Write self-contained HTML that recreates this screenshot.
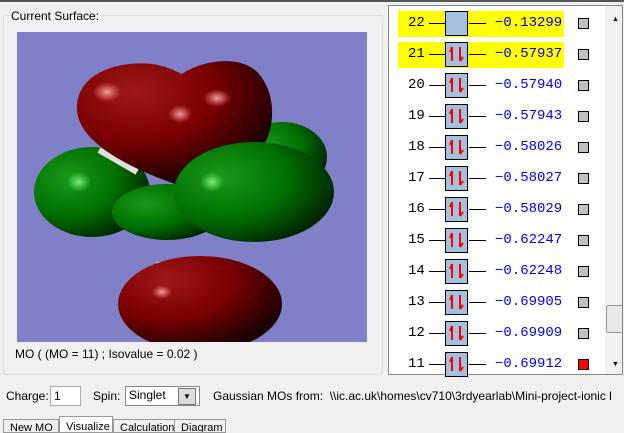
<!DOCTYPE html>
<html><head><style>
body{margin:0;width:624px;height:425px;background:#f0f0f0;font-family:"Liberation Sans",sans-serif;font-size:12px;position:relative;overflow:hidden}
.a{position:absolute}
.row{position:absolute;left:398px;width:166px;height:26px;font-family:"Liberation Mono",monospace;font-size:14px}
.n{position:absolute;left:10px;top:4px;color:#000}
.l1{position:absolute;left:31px;top:12px;width:16px;height:1px;background:#000}
.l2{position:absolute;left:71px;top:12px;width:17px;height:1px;background:#000}
.bx{position:absolute;left:47px;top:0;width:23px;height:25px;border:1px solid #000;background:#a3c0dd;box-sizing:border-box}
.v{position:absolute;left:97px;top:4px;color:#0000ee}
.sq{position:absolute;left:180px;top:7px;width:9px;height:9px;border:1px solid #000;background:#c0c0c0}
.tab{position:absolute;top:419px;height:12px;border:1px solid #999;font-size:11px;padding-left:6px;line-height:17px;overflow:hidden;white-space:nowrap;box-sizing:content-box}
</style></head><body>
<div class="a" style="left:0;top:0;width:624px;height:2px;background:#555"></div>
<div class="a" style="left:3px;top:15px;width:378px;height:358px;border:1px solid #d5dfe5;border-radius:3px;background:#f0f0f0"></div>
<div class="a" style="left:9px;top:9px;background:#f0f0f0;padding:0 2px">Current Surface:</div>
<svg class="a" style="left:17px;top:32px" width="350" height="310">
<defs>
<radialGradient id="r" cx="30%" cy="25%" r="75%"><stop offset="0" stop-color="#a01818"/><stop offset=".55" stop-color="#780000"/><stop offset="1" stop-color="#200000"/></radialGradient>
<radialGradient id="g" cx="30%" cy="35%" r="75%"><stop offset="0" stop-color="#1a9a1a"/><stop offset=".55" stop-color="#007000"/><stop offset="1" stop-color="#002000"/></radialGradient>
<radialGradient id="h" r="50%"><stop offset="0" stop-color="#ffb0b0" stop-opacity=".9"/><stop offset="1" stop-color="#ff8080" stop-opacity="0"/></radialGradient>
<radialGradient id="hg" r="50%"><stop offset="0" stop-color="#a0ffa0" stop-opacity=".8"/><stop offset="1" stop-color="#60ff60" stop-opacity="0"/></radialGradient>
</defs>
<rect width="350" height="310" fill="#8080c8"/>
<ellipse cx="265" cy="125" rx="45" ry="35" fill="url(#g)"/>
<ellipse cx="75" cy="160" rx="58" ry="45" fill="url(#g)"/>
<ellipse cx="150" cy="180" rx="55" ry="28" fill="url(#g)"/>
<path d="M82 118 L120 140" stroke="#e0e0e0" stroke-width="6"/>
<path d="M158 152 C110 135 62 110 60 78 C58 45 95 28 135 32 C150 34 160 40 165 42 C185 28 225 22 242 42 C262 66 258 105 238 125 C215 142 185 150 158 152 Z" fill="url(#r)"/>
<ellipse cx="90" cy="60" rx="14" ry="10" fill="url(#h)"/>
<ellipse cx="163" cy="82" rx="12" ry="9" fill="url(#h)"/>
<ellipse cx="200" cy="66" rx="14" ry="9" fill="url(#h)"/>
<ellipse cx="237" cy="160" rx="80" ry="50" fill="url(#g)"/>
<ellipse cx="195" cy="150" rx="12" ry="10" fill="url(#hg)"/>
<ellipse cx="62" cy="150" rx="12" ry="10" fill="url(#hg)"/>
<path d="M140 233 L195 230" stroke="#ddd" stroke-width="6"/>
<ellipse cx="183" cy="272" rx="82" ry="48" fill="url(#r)"/>
<ellipse cx="145" cy="260" rx="10" ry="7" fill="url(#h)"/>
</svg>
<div class="a" style="left:15px;top:347px">MO ( (MO = 11) ; Isovalue = 0.02 )</div>
<div class="a" style="left:388px;top:5px;width:233px;height:368px;border:1px solid #828790;background:#fff;overflow:hidden">
<div class="a" style="left:216px;top:0;width:17px;height:368px;background:#f0f0f0"></div>
<div class="a" style="left:223px;top:10px;font-size:7px">▲</div>
<div class="a" style="left:223px;top:355px;font-size:7px">▼</div>
<div class="a" style="left:217px;top:299px;width:15px;height:26px;border:1px solid #999;border-radius:2px;background:#e8e8e8"></div>
</div>
<div id="rows"></div>
<script>
var d=[[22,'-0.13299'],[21,'-0.57937'],[20,'-0.57940'],[19,'-0.57943'],[18,'-0.58026'],[17,'-0.58027'],[16,'-0.58029'],[15,'-0.62247'],[14,'-0.62248'],[13,'-0.69905'],[12,'-0.69909'],[11,'-0.69912']];
var h='';d.forEach(function(r,i){var y=11+i*31;h+='<div class="row" style="top:'+y+'px;'+(i<2?'background:#ffff00':'')+'"><span class="n">'+r[0]+'</span><div class="l1"></div><div class="bx">'+(i>0?'<svg width="21" height="23"><path d="M6 18V4M6 4L4 9" stroke="red" stroke-width="2" fill="none"/><path d="M14 4V18M14 18L17 14" stroke="red" stroke-width="2" fill="none"/></svg>':'')+'</div><div class="l2"></div><span class="v">'+r[1].replace('-','\u2212')+'</span><div class="sq" style="'+(i==11?'background:#f00':'')+'"></div></div>'});
document.getElementById('rows').innerHTML=h;
</script>
<div class="a" style="left:6px;top:389px">Charge:</div>
<div class="a" style="left:50px;top:386px;width:26px;height:18px;border:1px solid #abadb3;background:#fff;padding-left:3px;line-height:18px">1</div>
<div class="a" style="left:93px;top:389px">Spin:</div>
<div class="a" style="left:125px;top:386px;width:70px;height:18px;border:1px solid #888;background:#fff;line-height:16px;padding-left:3px">Singlet</div>
<div class="a" style="left:178px;top:388px;width:16px;height:15px;border:1px solid #777;background:#ddd;font-size:8px;text-align:center;line-height:15px">▼</div>
<div class="a" style="left:213px;top:389px;white-space:nowrap">Gaussian MOs from:&nbsp; \\ic.ac.uk\homes\cv710\3rdyearlab\Mini-project-ionic l</div>
<div class="tab" style="left:3px;width:48px">New MO</div>
<div class="tab" style="left:59px;top:416px;height:15px;width:46px;background:#fff;line-height:20px">Visualize</div>
<div class="tab" style="left:113px;width:54px">Calculation</div>
<div class="tab" style="left:174px;width:44px">Diagram</div>
</body></html>
